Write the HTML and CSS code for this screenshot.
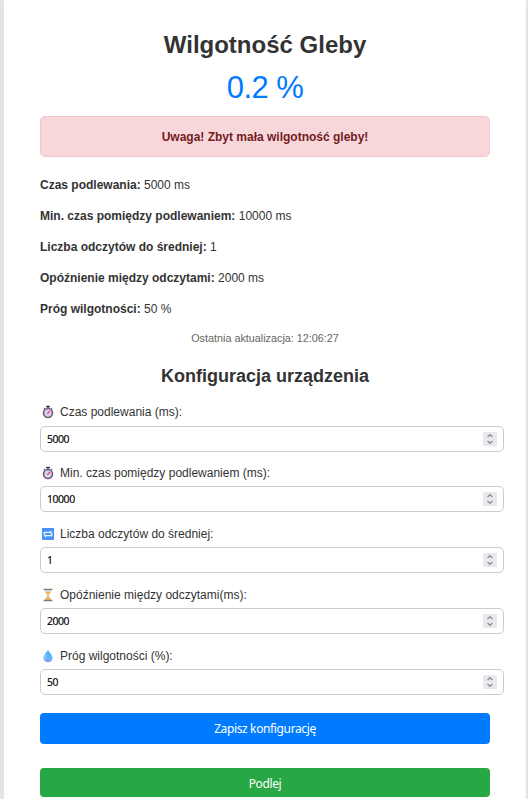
FILE: index.html
```html
<!DOCTYPE html>
<html lang="pl">
<head>
<meta charset="utf-8">
<title>Wilgotność Gleby</title>
<link rel="stylesheet" href="styles.css">
</head>
<body>
<svg class="defs" width="0" height="0" aria-hidden="true">
  <defs>
    <linearGradient id="drop-fill" x1="0" y1="0" x2="0" y2="1"><stop offset="0" stop-color="#45b5ed"/><stop offset=".6" stop-color="#59b9f5"/><stop offset="1" stop-color="#9a91f0"/></linearGradient>
    <symbol id="watch" viewBox="0 0 14 14">
      <path d="M5 .8h4v1.5H5zM6.2 2h1.6v2H6.2z" fill="#514062"/>
      <path d="M2.8 4l1-1M11.2 4l-1-1" stroke="#78658a" stroke-width="1.2"/>
      <circle cx="7" cy="8" r="4.5" fill="#d9d3e3" stroke="#6d5a80" stroke-width="1.6"/>
      <path d="M7 8l2-2" stroke="#ee3c78" stroke-width="1.1"/>
      <circle cx="6.8" cy="8.2" r=".8" fill="#aa6793"/>
    </symbol>
    <symbol id="repeat" viewBox="0 0 14 14">
      <rect x="1" y="1" width="12" height="12" rx=".8" fill="#4a93f5"/>
      <path d="M3.300 8V5.300h6.200M10.700 6v2.700H4.500" fill="none" stroke="#e8f3ff" stroke-width="1.300"/>
      <path d="M8.800 3.600l2.600 1.700L8.800 6.600zM5.200 7.400v3L2.600 8.700z" fill="#e8f3ff"/>
    </symbol>
    <symbol id="glass" viewBox="0 0 14 14">
      <path d="M3.8 2h6.4c0 3-1.4 3.8-2.5 5 1.1 1.2 2.5 2 2.5 5H3.8c0-3 1.4-3.8 2.5-5C5.200 5.800 3.800 5 3.800 2z" fill="#d5e2eb"/>
      <path d="M4.5 3.800h5L7.500 6.800v1.800L9.900 12H4.100l2.400-3.400V6.800z" fill="#f8b83c"/>
      <path d="M2.700 1.500h8.600M2.700 12.500h8.600" stroke="#8a7a68" stroke-width="1.300"/>
    </symbol>
    <symbol id="drop" viewBox="0 0 14 14">
      <path d="M7 .8C6.200 3 2.500 6 2.500 9a4.500 4.200 0 0 0 9 0C11.500 6 7.800 3 7 .8z" fill="url(#drop-fill)"/>
      <path d="M5.600 6C4.300 8 4.300 9 4.800 10" fill="none" stroke="#a8e5fb" stroke-width="1"/>
    </symbol>
    <symbol id="spin" viewBox="0 0 14 14">
      <rect width="14" height="14" fill="#e9e9ed"/>
      <path d="M4.500 5L7 2.800 9.500 5M4.500 9L7 11.200 9.500 9" fill="none" stroke="#8f8f9d" stroke-width="1.400"/>
    </symbol>
  </defs>
</svg>
<main class="card">
  <h1 class="title">Wilgotność Gleby</h1>
  <div class="reading">0.2 %</div>
  <div class="alert">Uwaga! Zbyt mała wilgotność gleby!</div>
  <div class="info">
    <p><strong>Czas podlewania:</strong> 5000 ms</p>
    <p><strong>Min. czas pomiędzy podlewaniem:</strong> 10000 ms</p>
    <p><strong>Liczba odczytów do średniej:</strong> 1</p>
    <p><strong>Opóźnienie między odczytami:</strong> 2000 ms</p>
    <p><strong>Próg wilgotności:</strong> 50 %</p>
  </div>
  <div class="updated">Ostatnia aktualizacja: 12:06:27</div>
  <h2 class="subtitle">Konfiguracja urządzenia</h2>
  <form class="form">
    <div class="field"><label for="f1"><svg class="icon"><use href="#watch"/></svg><span>Czas podlewania (ms):</span></label><div class="box"><input id="f1" value="5000"><svg class="spin"><use href="#spin"/></svg></div></div>
    <div class="field"><label for="f2"><svg class="icon"><use href="#watch"/></svg><span>Min. czas pomiędzy podlewaniem (ms):</span></label><div class="box"><input id="f2" value="10000"><svg class="spin"><use href="#spin"/></svg></div></div>
    <div class="field"><label for="f3"><svg class="icon"><use href="#repeat"/></svg><span>Liczba odczytów do średniej:</span></label><div class="box"><input id="f3" value="1"><svg class="spin"><use href="#spin"/></svg></div></div>
    <div class="field"><label for="f4"><svg class="icon"><use href="#glass"/></svg><span>Opóźnienie między odczytami(ms):</span></label><div class="box"><input id="f4" value="2000"><svg class="spin"><use href="#spin"/></svg></div></div>
    <div class="field"><label for="f5"><svg class="icon"><use href="#drop"/></svg><span>Próg wilgotności (%):</span></label><div class="box"><input id="f5" value="50"><svg class="spin"><use href="#spin"/></svg></div></div>
    <button class="btn save" type="button">Zapisz konfigurację</button>
    <button class="btn water" type="button">Podlej</button>
  </form>
</main>
</body>
</html>
```
FILE: styles.css
```css
* { box-sizing: border-box; }
body {
  margin: 0;
  height: 799px;
  overflow: hidden;
  background: #e4e9ea;
  color: #333;
  font: 12px/18px "Liberation Sans", Arial, sans-serif;
}
.defs { display: block; }
.card {
  width: 522px;
  height: 799px;
  margin-left: 4px;
  padding: 30px 36px 0;
  background: #fff;
  box-shadow: 0 0 8px rgba(0, 0, 0, .06);
}
.title { margin: 0; font-size: 24px; line-height: 30px; text-align: center; }
.reading { height: 56px; color: #007bff; font-size: 31px; letter-spacing: -.6px; line-height: 55px; text-align: center; }
.alert {
  height: 41px;
  border: 1px solid #f5c6cb;
  border-radius: 5px;
  background: #f8d7da;
  color: #721c24;
  font-weight: bold;
  line-height: 40px;
  text-align: center;
}
.info { padding-top: 19px; }
.info p { margin: 0 0 13px; }
.updated { height: 18px; margin-top: -2px; color: #666; font-size: 10.8px; text-align: center; }
.subtitle { margin: 17px 0 0; font-size: 18px; line-height: 24px; text-align: center; }
.form { padding-top: 15.4px; }
.field { height: 60.8px; }
.field label { display: flex; align-items: center; gap: 5px; height: 18px; margin-bottom: 4.2px; }
.icon { width: 14px; height: 14px; margin-left: 1px; }
.box {
  display: flex;
  align-items: center;
  width: 464px;
  height: 26px;
  padding: 0 6px;
  border: 1px solid #ccc;
  border-radius: 5px;
}
.box input {
  flex: 1;
  min-width: 0;
  padding: 0;
  border: 0;
  outline: 0;
  background: none;
  color: #000;
  font: 10.4px/16px "Open Sans", sans-serif;
  letter-spacing: -.4px;
  -webkit-text-stroke: .2px #000;
}
.spin { width: 14px; height: 14px; }
.btn {
  display: block;
  width: 450px;
  height: 31px;
  padding: 0;
  border: 0;
  border-radius: 4px;
  color: #fff;
  font: 12px/31px "Noto Sans", sans-serif;
  letter-spacing: -.37px;
}
.save { margin-top: 5.6px; background: #007bff; }
.water { height: 29px; margin-top: 24px; background: #28a745; }
```
